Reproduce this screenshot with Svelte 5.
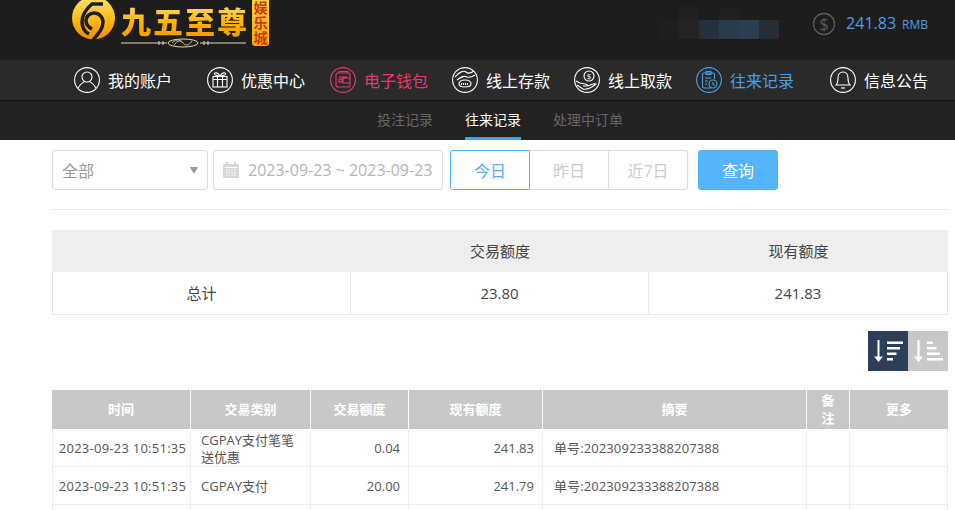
<script>
  const navItems = [
    { label: "我的账户", icon: "user", w: 133 },
    { label: "优惠中心", icon: "gift", w: 123 },
    { label: "电子钱包", icon: "wallet", w: 122, tone: "pink" },
    { label: "线上存款", icon: "deposit", w: 122 },
    { label: "线上取款", icon: "withdraw", w: 122 },
    { label: "往来记录", icon: "record", w: 134, tone: "blue" },
    { label: "信息公告", icon: "bell", w: 120 },
  ];

  const subTabs = ["投注记录", "往来记录", "处理中订单"];
  const ranges = ["今日", "昨日", "近7日"];

  const columns = [
    { label: "时间", w: 138 },
    { label: "交易类别", w: 120 },
    { label: "交易额度", w: 98 },
    { label: "现有额度", w: 134 },
    { label: "摘要", w: 264 },
    { label: "备注", w: 43 },
    { label: "更多", w: 99 },
  ];

  const rows = [
    { time: "2023-09-23 10:51:35", type: "CGPAY支付笔笔送优惠", amount: "0.04", balance: "241.83", note: "单号:202309233388207388" },
    { time: "2023-09-23 10:51:35", type: "CGPAY支付", amount: "20.00", balance: "241.79", note: "单号:202309233388207388" },
    { time: "2023-09-23 10:40:12", type: "真人返水优惠活动", amount: "3.76", balance: "221.79", note: "单号:202309233388207301" },
  ];

  // blurred account name in the header, coarse mosaic blocks
  const mosaic = [
    { x: 20, y: 7, w: 20, h: 13, c: "#212121" },
    { x: 60, y: 7, w: 20, h: 13, c: "#1f2021" },
    { x: 0, y: 20, w: 20, h: 19, c: "#1f1f1f" },
    { x: 20, y: 20, w: 20, h: 19, c: "#242424" },
    { x: 40, y: 20, w: 20, h: 19, c: "#24303b" },
    { x: 60, y: 20, w: 20, h: 19, c: "#2a3d4f" },
    { x: 80, y: 20, w: 20, h: 19, c: "#2a3f52" },
    { x: 100, y: 20, w: 20, h: 19, c: "#252c33" },
  ];
</script>

<div class="page">
  <header class="top">
    <div class="logo">
      <svg class="logo-mark" viewBox="0 0 44 41" width="44" height="41">
        <defs>
          <linearGradient id="gold" x1="0" y1="0" x2="0" y2="1">
            <stop offset="0" stop-color="#ffe27a" />
            <stop offset="0.55" stop-color="#ffb90f" />
            <stop offset="1" stop-color="#f08a00" />
          </linearGradient>
        </defs>
        <circle cx="21.500" cy="18" r="21.500" fill="url(#gold)" />
        <path d="M31 4H20C14 9 10 15 10 22c0 6 3 10 7 12" fill="none" stroke="#1d1d1d" stroke-width="3.500" />
        <path d="M21 40c5-6 10-11 10-18 0-5-4-9-9-9-4 0-8 3-8 8 0 3 2 6 6 8" fill="none" stroke="#1d1d1d" stroke-width="3.500" />
      </svg>
      <div class="logo-words">
        <span class="logo-name">九五至尊</span>
        <svg class="logo-line" viewBox="0 0 125 10" width="125" height="10">
          <path d="M0 5H46M79 5H125" stroke="#e8dca0" stroke-width="1" />
          <path d="M38 3v4M42 3v4M83 3v4M87 3v4" stroke="#e8dca0" stroke-width="1" />
          <ellipse cx="62" cy="5" rx="15" ry="4" fill="none" stroke="#e8dca0" stroke-width="1" />
          <path d="M53 7c4-6 8-4 9-2s5 4 9-2M51 5c5-5 9-3 11 0" fill="none" stroke="#e8dca0" stroke-width="0.8" />
        </svg>
      </div>
      <span class="logo-tag">娱乐城</span>
    </div>

    <div class="account">
      <div class="mosaic">
        {#each mosaic as m}
          <i style="left:{m.x}px;top:{m.y}px;width:{m.w}px;height:{m.h}px;background:{m.c}"></i>
        {/each}
      </div>
      <div class="balance">
        <svg class="coin" viewBox="0 0 24 24" width="24" height="24">
          <circle cx="12" cy="12" r="10.500" fill="none" stroke="#5a5a5a" stroke-width="1.300" />
          <text x="12" y="17.500" text-anchor="middle" class="coin-sign">$</text>
        </svg>
        <span class="amount">241.83</span>
        <span class="unit">RMB</span>
      </div>
    </div>
  </header>

  <nav class="nav">
    {#each navItems as item}
      <a class="nav-item {item.tone || ''}" style="width:{item.w}px" href="/">
        <svg viewBox="0 0 26 26" width="26" height="26" fill="none" stroke="currentColor" stroke-width="1.100">
          <circle cx="13" cy="13" r="12.400" />
          {#if item.icon === "user"}
            <circle cx="13" cy="10" r="5" />
            <path d="M4 21c2-4 5-5.500 6.500-6.500M22 21c-2-4-5-5.500-6.500-6.500" />
          {:else if item.icon === "gift"}
            <rect x="6" y="9.500" width="14" height="10.500" />
            <path d="M6 12.500h14M10.500 9.500V20M15.500 9.500V20" />
            <path d="M13 9c-2-3.500-5-4-5.500-2.500S10 9 13 9c2-3.500 5-4 5.500-2.500S16 9 13 9z" />
          {:else if item.icon === "wallet"}
            <rect x="6" y="6" width="14" height="14" rx="2" />
            <path d="M9 6V4.500h9V6M9 10h8M20 11h-7v5h7" />
            <rect x="9" y="12" width="3" height="3" />
          {:else if item.icon === "deposit"}
            <path d="M3 10c4-5 9-7 11-5 2 2 5 1 8-1M5 13c4-3 7-5 10-3 3 1 5 0 8-2" />
            <path d="M7 17c0-3 2.500-4 6-4s6 1 6 4c0 2-2.500 3-6 3s-6-1-6-3z" />
            <path d="M9.500 16v2M11.500 16v2M13.500 16v2M15.500 16v2" />
          {:else if item.icon === "withdraw"}
            <circle cx="15" cy="9" r="5" />
            <text x="15" y="12" text-anchor="middle" class="mini-sign">$</text>
            <path d="M2 14l4 2 5 1c2 0 3 1 2 2l-4 0M3 18l6 4c3 1 8-1 13-5-2-1-4 0-8 2" />
          {:else if item.icon === "record"}
            <path d="M15 21H8a1.500 1.500 0 0 1-1.500-1.500V7.500A1.500 1.500 0 0 1 8 6h9a1.500 1.500 0 0 1 1.500 1.500V12" />
            <rect x="10" y="4.500" width="5" height="3" />
            <path d="M9 11h6M9 14h3M9 17h2" />
            <circle cx="17" cy="17" r="4" />
            <path d="M17 15v2.500l1.800 1" />
          {:else if item.icon === "bell"}
            <path d="M6 18c1.500-1.500 2-3 2-7 0-3.500 2-6 5-6s5 2.500 5 6c0 4 .5 5.500 2 7z" />
            <path d="M11 21h4" />
          {/if}
        </svg>
        <span>{item.label}</span>
      </a>
    {/each}
  </nav>

  <div class="subnav">
    {#each subTabs as tab, i}
      <a class="sub-tab" class:on={i === 1} href="/">{tab}</a>
    {/each}
  </div>

  <main class="body">
    <form class="filters">
      <div class="field select">
        <span>全部</span>
        <i class="caret"></i>
      </div>
      <div class="field date">
        <svg viewBox="0 0 16 16" width="16" height="16">
          <rect x="0" y="2" width="16" height="14" rx="1.500" fill="#d8d8d8" />
          <rect x="3" y="0" width="2" height="4" fill="#d8d8d8" />
          <rect x="11" y="0" width="2" height="4" fill="#d8d8d8" />
          <path d="M2 5.500h12" stroke="#fff" />
          <path d="M3 8h10M3 10.500h10M3 13h10" stroke="#fff" stroke-dasharray="1.500 1.200" />
        </svg>
        <span>2023-09-23 ~ 2023-09-23</span>
      </div>
      <div class="ranges">
        {#each ranges as r, i}
          <button type="button" class="range" class:on={i === 0}>{r}</button>
        {/each}
      </div>
      <button type="button" class="query">查询</button>
    </form>

    <div class="summary">
      <div class="s-head"></div>
      <div class="s-head">交易额度</div>
      <div class="s-head">现有额度</div>
      <div class="s-cell">总计</div>
      <div class="s-cell">23.80</div>
      <div class="s-cell">241.83</div>
    </div>

    <div class="sorts">
      <button type="button" class="sort on" aria-label="降序">
        <svg viewBox="0 0 30 24" width="30" height="24" fill="#fff">
          <rect x="4.500" y="1" width="2" height="17" />
          <path d="M1 17.500h9L5.500 23z" />
          <rect x="14" y="2.500" width="16" height="2.500" />
          <rect x="14" y="8" width="13" height="2.500" />
          <rect x="14" y="13.500" width="9.500" height="2.500" />
          <rect x="14" y="19" width="6" height="2.500" />
        </svg>
      </button>
      <button type="button" class="sort" aria-label="升序">
        <svg viewBox="0 0 30 24" width="30" height="24" fill="#fff">
          <rect x="4.500" y="1" width="2" height="17" />
          <path d="M1 17.500h9L5.500 23z" />
          <rect x="14" y="2.500" width="6" height="2.500" />
          <rect x="14" y="8" width="9.500" height="2.500" />
          <rect x="14" y="13.500" width="13" height="2.500" />
          <rect x="14" y="19" width="16" height="2.500" />
        </svg>
      </button>
    </div>

    <table class="records">
      <colgroup>
        {#each columns as c}
          <col style="width:{c.w}px" />
        {/each}
      </colgroup>
      <thead>
        <tr>
          {#each columns as c}
            <th>{c.label}</th>
          {/each}
        </tr>
      </thead>
      <tbody>
        {#each rows as row}
          <tr>
            <td class="c">{row.time}</td>
            <td class="l">{row.type}</td>
            <td class="r">{row.amount}</td>
            <td class="r">{row.balance}</td>
            <td class="l note">{row.note}</td>
            <td></td>
            <td></td>
          </tr>
        {/each}
      </tbody>
    </table>
  </main>
</div>

<style>
  :global(html),
  :global(body) {
    margin: 0;
    height: 510px;
    overflow: hidden;
    background: #fff;
  }

  .page {
    width: 955px;
    font-family: "Open Sans", "Noto Sans CJK SC", sans-serif;
    color: #555;
  }

  .top {
    height: 60px;
    background: #1d1d1d;
    display: flex;
    justify-content: space-between;
  }

  .logo {
    display: flex;
    align-items: flex-start;
    padding-left: 72px;
  }

  .logo-words {
    margin-left: 5px;
    display: flex;
    flex-direction: column;
  }

  .logo-name {
    font-family: "Noto Sans CJK SC", sans-serif;
    font-weight: 900;
    font-size: 30px;
    letter-spacing: 2px;
    line-height: 36px;
    margin-top: 2px;
    background: linear-gradient(#ffe27a, #ffb000 60%, #f59a00);
    -webkit-background-clip: text;
    background-clip: text;
    color: transparent;
    white-space: nowrap;
  }

  .logo-tag {
    width: 17px;
    height: 46px;
    margin-left: 3px;
    border-radius: 0 0 3px 3px;
    background: linear-gradient(#ffd23c, #f5a800);
    color: #c8380a;
    font-family: "Noto Sans CJK SC", sans-serif;
    font-weight: 700;
    font-size: 14px;
    line-height: 15px;
    text-align: center;
  }

  .account {
    display: flex;
    padding-right: 27px;
  }

  .mosaic {
    position: relative;
    width: 120px;
    margin-right: 33px;
  }

  .mosaic i {
    position: absolute;
  }

  .balance {
    display: flex;
    align-items: center;
    height: 46px;
  }

  .coin {
    margin: 2px 10px 0 0;
  }

  .coin-sign {
    font-family: "Open Sans", sans-serif;
    font-size: 16px;
    fill: #5a5a5a;
  }

  .amount {
    font-size: 16px;
    color: #4a9fe6;
  }

  .unit {
    font-size: 12px;
    color: #4a9fe6;
    margin-left: 6px;
    margin-top: 3px;
  }

  .nav {
    height: 40px;
    background: #2a2a2a;
    border-bottom: 1px solid #111;
    display: flex;
    align-items: center;
    padding-left: 74px;
  }

  .nav-item {
    display: flex;
    align-items: center;
    gap: 8px;
    flex: none;
    color: #fff;
    font-size: 16px;
    text-decoration: none;
    white-space: nowrap;
  }

  .nav-item.pink {
    color: #e8386a;
  }

  .nav-item.blue {
    color: #4a9fe6;
  }

  .mini-sign {
    font-family: "Open Sans", sans-serif;
    font-size: 8px;
    fill: currentColor;
    stroke: none;
  }

  .subnav {
    height: 39px;
    background: #222;
    display: flex;
    justify-content: center;
    gap: 32px;
    padding-left: 45px;
  }

  .sub-tab {
    font-size: 14px;
    line-height: 38px;
    height: 36px;
    color: #666;
    text-decoration: none;
    border-bottom: 3px solid transparent;
  }

  .sub-tab.on {
    color: #fff;
    border-bottom-color: #4a9fe6;
  }

  .body {
    padding: 10px 7px 0 52px;
  }

  .filters {
    display: flex;
    height: 40px;
    padding-bottom: 19px;
    border-bottom: 1px solid #e8e8e8;
  }

  .field {
    box-sizing: border-box;
    height: 40px;
    border: 1px solid #ddd;
    border-radius: 3px;
    display: flex;
    align-items: center;
    color: #999;
    font-size: 16px;
  }

  .select {
    width: 156px;
    padding: 0 9px;
    justify-content: space-between;
    margin-right: 5px;
  }

  .caret {
    border: 4px solid transparent;
    border-top: 7px solid #999;
    border-bottom: 0;
  }

  .date {
    width: 230px;
    padding-left: 9px;
    gap: 9px;
    margin-right: 7px;
    color: #b4b4b4;
    white-space: nowrap;
  }

  .ranges {
    display: flex;
    width: 238px;
    margin-right: 10px;
  }

  .range {
    flex: 1;
    height: 40px;
    background: #fff;
    border: 1px solid #ddd;
    border-left: 0;
    color: #ccc;
    font: inherit;
    font-size: 16px;
    padding: 0;
  }

  .range:last-child {
    border-radius: 0 3px 3px 0;
  }

  .range.on {
    border: 1px solid #4db3ff;
    border-radius: 3px 0 0 3px;
    color: #4db3ff;
  }

  .query {
    width: 80px;
    height: 40px;
    background: #54b4fc;
    border: 0;
    border-radius: 3px;
    color: #fff;
    font: inherit;
    font-size: 16px;
    padding: 0;
  }

  .summary {
    margin-top: 20px;
    display: grid;
    grid-template-columns: 299px 298px 299px;
    font-size: 15px;
    color: #444;
    text-align: center;
  }

  .s-head {
    height: 42px;
    line-height: 42px;
    background: #eee;
  }

  .s-cell {
    box-sizing: border-box;
    height: 43px;
    line-height: 42px;
    border-right: 1px solid #e8e8e8;
    border-bottom: 1px solid #e8e8e8;
  }

  .s-cell:nth-child(4) {
    border-left: 1px solid #e8e8e8;
  }

  .sorts {
    margin-top: 16px;
    display: flex;
    justify-content: flex-end;
  }

  .sort {
    width: 40px;
    height: 40px;
    border: 0;
    padding: 0;
    background: #c8c8c8;
    display: flex;
    align-items: center;
    justify-content: center;
  }

  .sort.on {
    background: #2c3e58;
  }

  .records {
    margin-top: 19px;
    width: 896px;
    table-layout: fixed;
    border-collapse: separate;
    border-spacing: 0;
    font-size: 13px;
    color: #555;
  }

  .records th {
    height: 39px;
    box-sizing: border-box;
    padding: 0 12px 2px;
    background: #c8c8c8;
    color: #fff;
    font-weight: 700;
    font-size: 13px;
    line-height: 18px;
    border-left: 1px solid #fff;
  }

  .records th:first-child {
    border-left: 0;
  }

  .records td {
    height: 38px;
    box-sizing: border-box;
    padding: 2px 8px 0;
    line-height: 17px;
    border-left: 1px solid #eee;
    border-bottom: 1px solid #eee;
  }

  .records td:last-child {
    border-right: 1px solid #eee;
  }

  .records td.c {
    padding: 2px 0 0 2px;
    text-align: center;
    white-space: nowrap;
    letter-spacing: 0.25px;
  }

  .records td.l {
    padding: 2px 10px 0;
    text-align: left;
  }

  .records td.note {
    padding-left: 11px;
    letter-spacing: 0.1px;
  }

  .records td.r {
    text-align: right;
  }
</style>
